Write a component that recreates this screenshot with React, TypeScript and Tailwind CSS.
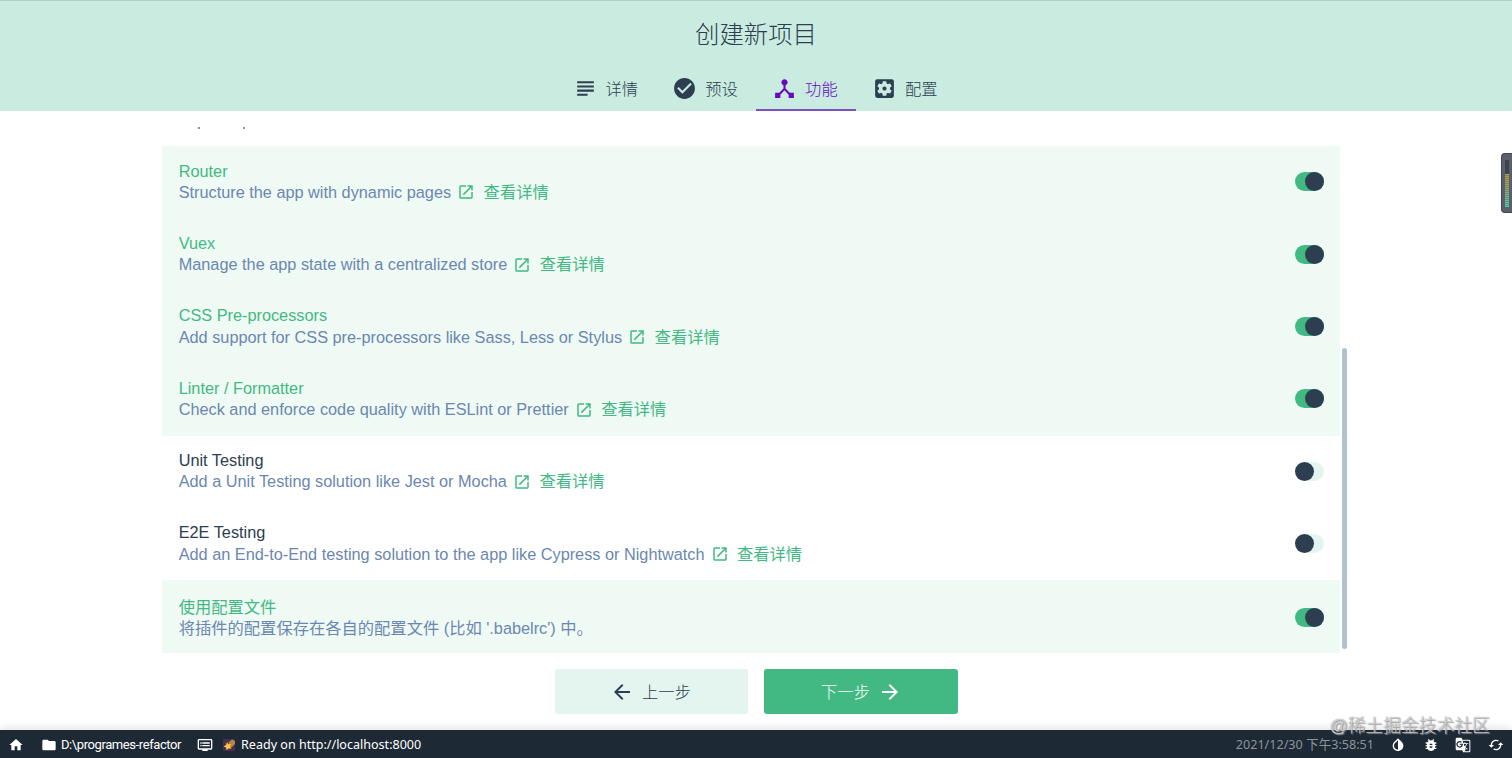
import { useState } from 'react';
import {
  MdArrowBack,
  MdArrowForward,
  MdBugReport,
  MdCached,
  MdCheckCircle,
  MdDeviceHub,
  MdDvr,
  MdFolder,
  MdGTranslate,
  MdHome,
  MdInvertColors,
  MdOpenInNew,
  MdSettingsApplications,
  MdSubject,
} from 'react-icons/md';

interface Feature {
  id: string;
  name: string;
  description: string;
  hasLink: boolean;
  enabled: boolean;
}

const initialFeatures: Feature[] = [
  { id: 'router', name: 'Router', description: 'Structure the app with dynamic pages', hasLink: true, enabled: true },
  { id: 'vuex', name: 'Vuex', description: 'Manage the app state with a centralized store', hasLink: true, enabled: true },
  { id: 'css', name: 'CSS Pre-processors', description: 'Add support for CSS pre-processors like Sass, Less or Stylus', hasLink: true, enabled: true },
  { id: 'linter', name: 'Linter / Formatter', description: 'Check and enforce code quality with ESLint or Prettier', hasLink: true, enabled: true },
  { id: 'unit', name: 'Unit Testing', description: 'Add a Unit Testing solution like Jest or Mocha', hasLink: true, enabled: false },
  { id: 'e2e', name: 'E2E Testing', description: 'Add an End-to-End testing solution to the app like Cypress or Nightwatch', hasLink: true, enabled: false },
  { id: 'config', name: '使用配置文件', description: "将插件的配置保存在各自的配置文件 (比如 '.babelrc') 中。", hasLink: false, enabled: true },
];

const tabs = [
  { id: 'details', label: '详情', icon: MdSubject },
  { id: 'presets', label: '预设', icon: MdCheckCircle },
  { id: 'features', label: '功能', icon: MdDeviceHub },
  { id: 'config', label: '配置', icon: MdSettingsApplications },
];

function Header() {
  const [active, setActive] = useState('features');

  return (
    <header className="flex h-[111px] shrink-0 flex-col items-center border-t border-[#b3cfc5] bg-[#caece0]">
      <h1 className="mt-4 text-[24.4px] leading-9 font-light">创建新项目</h1>
      <nav className="mt-[14px] flex h-[44px]">
        {tabs.map(({ id, label, icon: Icon }) => (
          <button
            key={id}
            onClick={() => setActive(id)}
            className={`flex w-[99.8px] items-center justify-center gap-2 border-b-2 pr-[2px] text-[16.3px] font-light ${
              active === id ? 'border-[#7f4fc0] text-[#6806c1]' : 'border-transparent'
            }`}
          >
            <Icon className="size-[25px]" />
            <span className="pt-[2px]">{label}</span>
          </button>
        ))}
      </nav>
    </header>
  );
}

function Switch({ on }: { on: boolean }) {
  return (
    <span className={`flex h-[19px] w-[29px] items-center rounded-full ${on ? 'justify-end bg-[#42b983]' : 'bg-[#e4f5ef]'}`}>
      <span className="size-[19px] rounded-full bg-[#2c3e50]" />
    </span>
  );
}

function FeatureRow({ feature, onToggle }: { feature: Feature; onToggle: () => void }) {
  return (
    <div
      onClick={onToggle}
      className={`flex h-[72.4px] cursor-pointer items-center justify-between pr-4 pl-[16.7px] ${
        feature.hasLink ? 'pb-[0.8px]' : 'pt-[2.6px]'
      } ${feature.enabled ? 'bg-[#effaf5]' : ''}`}
    >
      <div className="text-[16.3px] leading-[21.3px]">
        <div className={feature.enabled ? 'text-[#42b983]' : ''}>{feature.name}</div>
        <div className="flex items-center text-[#6b87b0]">
          {feature.description}
          {feature.hasLink && (
            <a className="ml-[6px] flex items-center gap-[8.5px] text-[#42b983]">
              <MdOpenInNew className="size-[18px]" />
              查看详情
            </a>
          )}
        </div>
      </div>
      <Switch on={feature.enabled} />
    </div>
  );
}

// Small system monitor docked at the right screen edge
function LevelMeter() {
  return (
    <div className="absolute top-[153px] right-0 flex h-[60px] w-[11px] flex-col items-center rounded-l-[4px] border border-r-0 border-[#43474f] bg-[#5b5f69] pt-[6px]">
      <div className="h-[14px] w-1 bg-[#3f434d]" />
      <div className="h-[33px] w-1 bg-[repeating-linear-gradient(to_bottom,transparent_0_1px,#5b5f6980_1px_2px),linear-gradient(to_bottom,#b89c48,#98a55c_40%,#4ad0b4)]" />
    </div>
  );
}

function StatusBar() {
  return (
    <footer className="relative flex h-7 shrink-0 items-center bg-[#1d2935] pt-[2px] text-[13px] text-white shadow-[0_-2px_10px_rgba(0,0,0,0.12)]">
      <MdHome className="ml-2 size-4" />
      <MdFolder className="ml-[17px] size-4" />
      <span className="ml-1 w-[120px] font-[Roboto,sans-serif] text-[13px] tracking-[-0.41px] whitespace-nowrap">D:\programes-refactor</span>
      <MdDvr className="ml-4 size-4" />
      <svg viewBox="0 0 14 14" className="ml-[9px] size-[14px]">
        <rect x="1" y="1" width="12" height="12" rx="1" fill="#4b2d55" />
        <path d="M6.5 4.5l3.5-3 3 1.5v3l-4 4z" fill="#b5893f" />
        <path d="M5 4l1.4 2.2 2.8-.3-1.2 2.4 1.4 2.4-2.8-.3-2 1.9-.5-2.8-2.5-1.1 2.5-1.4z" fill="#ffc93c" />
      </svg>
      <span className="ml-[5px] pt-px font-['Noto_Sans'] text-[12.55px]">Ready on http://localhost:8000</span>
      <span className="ml-auto font-['Noto_Sans','Noto_Sans_CJK_SC',sans-serif] text-[12.6px] text-[#8e949a]">2021/12/30 下午3:58:51</span>
      <MdInvertColors className="ml-4 size-4" />
      <MdBugReport className="ml-[17px] size-4" />
      <MdGTranslate className="ml-4 size-4" />
      <MdCached className="mr-2 ml-[17px] size-4" />
    </footer>
  );
}

export default function App() {
  const [features, setFeatures] = useState(initialFeatures);

  const toggle = (id: string) => {
    setFeatures(features.map((f) => (f.id === id ? { ...f, enabled: !f.enabled } : f)));
  };

  return (
    <div className="relative flex h-[758px] w-[1512px] flex-col overflow-hidden bg-white font-['Liberation_Sans','Noto_Sans_CJK_SC',sans-serif] text-[#2c3e50]">
      <Header />

      <main className="flex min-h-0 flex-1 flex-col">
        <div className="flex h-[542px] pl-[162px]">
          <div className="w-[1178px]">
            {/* Descenders of the line scrolled under the header */}
            <div className="flex h-[35px] gap-[43px] pt-4 pl-9">
              <span className="h-[2px] w-[2px] bg-[#8a949e]" />
              <span className="h-[2px] w-[2px] bg-[#8a949e]" />
            </div>
            {features.map((feature) => (
              <FeatureRow key={feature.id} feature={feature} onToggle={() => toggle(feature.id)} />
            ))}
          </div>
          <div className="mt-[237px] ml-[2px] h-[301px] w-[5px] rounded-full bg-[#b0c4cf]" />
        </div>

        <div className="mt-4 flex justify-center gap-4 text-[16.3px] font-light">
          <button className="flex h-[45px] w-[193px] items-center justify-center gap-2 rounded-[3px] bg-[#e4f5ef] pr-px">
            <MdArrowBack className="size-6" />
            <span className="pt-[2px]">上一步</span>
          </button>
          <button className="flex h-[45px] w-[194px] items-center justify-center gap-2 rounded-[3px] bg-[#42b983] pl-[2px] text-white">
            <span className="pt-[2px]">下一步</span>
            <MdArrowForward className="size-6" />
          </button>
        </div>
      </main>

      <StatusBar />
      <LevelMeter />
      <div className="absolute top-[714px] right-[22px] text-[17.8px] leading-6 font-light text-white/60 [text-shadow:0_0_1px_#777,1px_1px_1px_#999]">
        @稀土掘金技术社区
      </div>
    </div>
  );
}
